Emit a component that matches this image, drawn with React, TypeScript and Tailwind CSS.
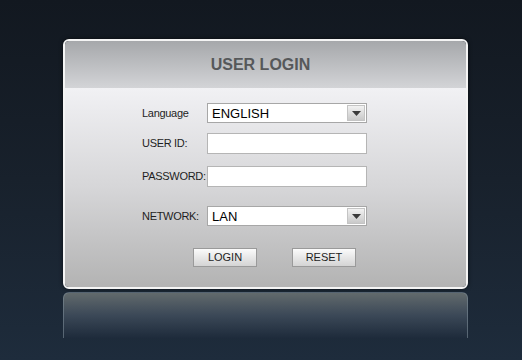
import { useState } from 'react';

// Dropdown arrow box used on the select fields
function SelectBox({ value }: { value: string }) {
  return (
    <div className="flex h-[20px] w-[160px] items-center border border-[#a7a7a7] bg-white">
      <span className="flex-1 pl-[4px] text-[13px] leading-none text-black">{value}</span>
      <span className="mr-[1px] flex h-[16px] w-[18px] items-center justify-center border border-[#c4c4c4] bg-gradient-to-b from-[#f2f2f2] to-[#c9c9c9]">
        <svg width="9" height="5" viewBox="0 0 9 5">
          <path d="M0 0h9L4.5 5z" fill="#3a3a3a" />
        </svg>
      </span>
    </div>
  );
}

function Row({ label, children, className = '' }: { label: string; children: React.ReactNode; className?: string }) {
  return (
    <div className={`flex items-center ${className}`}>
      <span className="w-[65px] text-[11px] tracking-[-0.3px] text-[#1e1e1e]">{label}</span>
      {children}
    </div>
  );
}

export default function App() {
  const [userId, setUserId] = useState('');
  const [password, setPassword] = useState('');

  return (
    <div
      className="h-[360px] w-[522px] overflow-hidden bg-gradient-to-b from-[#121820] via-[#18212c] to-[#1e2c3c] pt-[39px] pl-[63px]"
      style={{ fontFamily: '"Liberation Sans", Arial, sans-serif' }}
    >
      {/* Login panel */}
      <div className="w-[405px] overflow-hidden rounded-[6px] border-2 border-[#f4f4f4] shadow-[0_0_4px_rgba(0,0,0,0.6)]">
        <div className="flex h-[47px] items-center justify-center bg-gradient-to-b from-[#a6a8ab] to-[#d3d4d7] pr-[10px]">
          <h1 className="text-[16px] font-bold text-[#56585a]">USER LOGIN</h1>
        </div>
        <div className="flex h-[199px] flex-col bg-gradient-to-b from-[#f1f1f4] via-[#d6d6d8] to-[#b3b3b3] pl-[77px] pt-[15px]">
          <Row label="Language">
            <SelectBox value="ENGLISH" />
          </Row>
          <Row label="USER ID:" className="mt-[10px]">
            <input
              value={userId}
              onChange={(e) => setUserId(e.target.value)}
              className="h-[21px] w-[160px] border border-[#b5b5b5] bg-white outline-none"
            />
          </Row>
          <Row label="PASSWORD:" className="mt-[12px]">
            <input
              type="password"
              value={password}
              onChange={(e) => setPassword(e.target.value)}
              className="h-[21px] w-[160px] border border-[#b5b5b5] bg-white outline-none"
            />
          </Row>
          <Row label="NETWORK:" className="mt-[19px]">
            <SelectBox value="LAN" />
          </Row>
          <div className="mt-[22px] flex gap-[35px] pl-[51px]">
            <button className="h-[19px] w-[64px] border border-[#9a9a9a] bg-gradient-to-b from-[#fbfbfb] to-[#d4d4d4] text-[11px] text-[#1e1e1e]">
              LOGIN
            </button>
            <button className="h-[19px] w-[64px] border border-[#9a9a9a] bg-gradient-to-b from-[#fbfbfb] to-[#d4d4d4] text-[11px] text-[#1e1e1e]">
              RESET
            </button>
          </div>
        </div>
      </div>

      {/* Reflection */}
      <div className="mt-[3px] h-[46px] w-[405px] rounded-t-[6px] border-x border-t border-[#7c8a96]/60 bg-gradient-to-b from-[#626a6c] via-[#3b4857] to-[#1e2b3b]" />
    </div>
  );
}
